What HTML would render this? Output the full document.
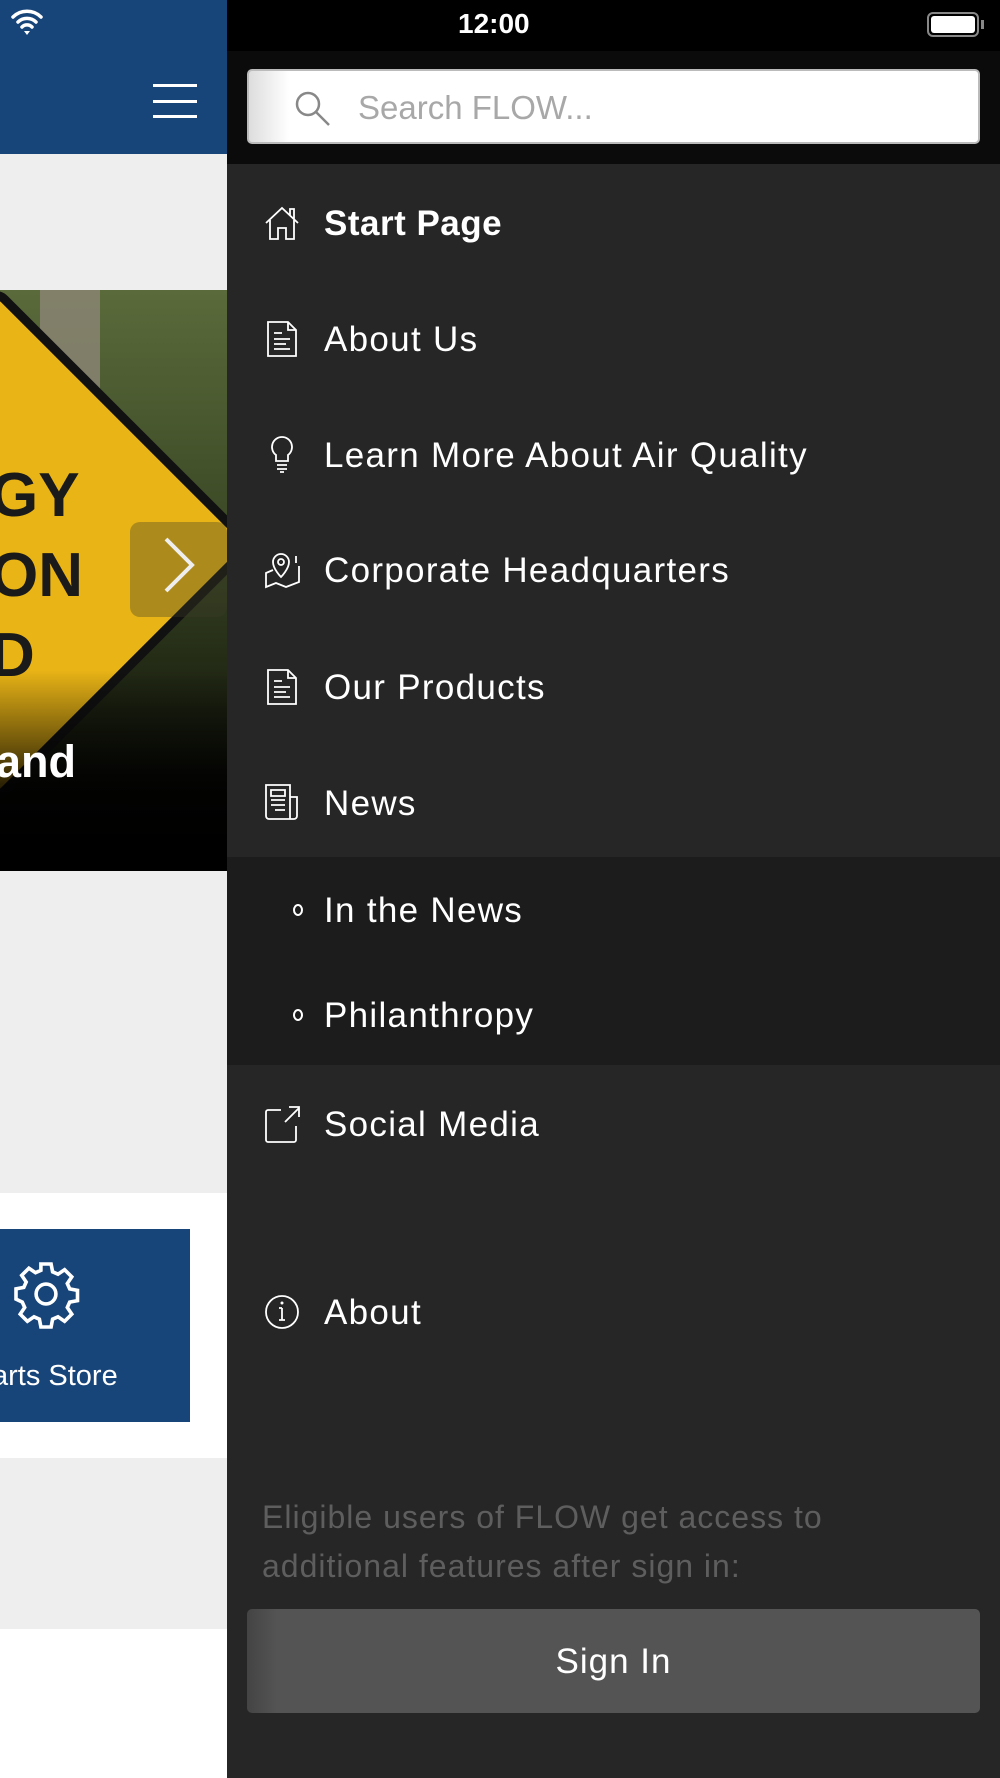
<!DOCTYPE html>
<html><head><meta charset="utf-8"><style>
*{margin:0;padding:0;box-sizing:border-box}
body{width:1000px;height:1778px;overflow:hidden;position:relative;font-family:"Liberation Sans",sans-serif;background:#fff}
.abs{position:absolute}
.menu{position:absolute;left:227px;width:773px;}
.item{position:absolute;left:0;width:773px;height:100px;display:flex;align-items:center;color:#fff;font-size:35px;letter-spacing:1.3px}
.item svg{position:absolute;left:36px}
.item span{position:absolute;left:97px;top:31px}
</style></head><body>
<!-- left app -->
<div class="abs" style="left:0;top:0;width:227px;height:154px;background:#174479"></div>
<svg class="abs" style="left:10px;top:6px" width="34" height="30" viewBox="0 0 34 30"><path d="M3 11a20 20 0 0 1 28 0M8 16a13 13 0 0 1 18 0M12 21a7 7 0 0 1 10 0" stroke="#fff" stroke-width="3.5" fill="none" stroke-linecap="round"/><path d="M14 25l3 4 3-4z" fill="#fff"/></svg>
<div class="abs" style="left:153px;top:84px;width:44px;height:3px;background:#fff"></div>
<div class="abs" style="left:153px;top:100px;width:44px;height:3px;background:#fff"></div>
<div class="abs" style="left:153px;top:115px;width:44px;height:3px;background:#fff"></div>
<div class="abs" style="left:0;top:154px;width:227px;height:136px;background:#eeeeee"></div>
<div class="abs" style="left:0;top:290px;width:227px;height:581px;overflow:hidden;background:linear-gradient(180deg,#5a6a3a 0%,#3c4a26 40%,#1e2412 70%,#000 100%)">
  <div class="abs" style="left:40px;top:0;width:60px;height:260px;background:#8c8676;opacity:.8"></div>
  <div class="abs" style="left:-190px;top:70px;width:370px;height:370px;background:#e9b416;border:9px solid #111;transform:rotate(45deg);border-radius:18px"></div>
  <div class="abs" style="left:-10px;top:170px;font:bold 62px 'Liberation Sans';color:#1a1a1a">GY</div>
  <div class="abs" style="left:-10px;top:250px;font:bold 62px 'Liberation Sans';color:#1a1a1a">ON</div>
  <div class="abs" style="left:-10px;top:330px;font:bold 62px 'Liberation Sans';color:#1a1a1a">D</div>
  <div class="abs" style="left:0;top:380px;width:227px;height:201px;background:linear-gradient(180deg,rgba(0,0,0,0),rgba(0,0,0,.85) 60%,#000)"></div>
  <div class="abs" style="left:130px;top:232px;width:97px;height:95px;background:rgba(60,60,40,.35);border-radius:10px"></div>
  <svg class="abs" style="left:160px;top:245px" width="40" height="60"><path d="M6 4l26 26-26 26" stroke="#eee" stroke-width="4" fill="none"/></svg>
  <div class="abs" style="left:-4px;top:446px;font:bold 45px 'Liberation Sans';color:#fff">and</div>
</div>
<div class="abs" style="left:0;top:871px;width:227px;height:322px;background:#eeeeee"></div>
<div class="abs" style="left:0;top:1229px;width:190px;height:193px;background:#174479"></div>
<svg class="abs" style="left:10px;top:1258px" width="72" height="72" viewBox="0 0 24 24"><path d="M10.3 2h3.4l.5 2.6 1.8.8 2.2-1.5 2.4 2.4-1.5 2.2.8 1.8 2.6.5v3.4l-2.6.5-.8 1.8 1.5 2.2-2.4 2.4-2.2-1.5-1.8.8-.5 2.6h-3.4l-.5-2.6-1.8-.8-2.2 1.5-2.4-2.4 1.5-2.2-.8-1.8L2 13.7v-3.4l2.6-.5.8-1.8-1.5-2.2 2.4-2.4 2.2 1.5 1.8-.8z" fill="none" stroke="#fff" stroke-width="1.2"/><circle cx="12" cy="12" r="3.3" fill="none" stroke="#fff" stroke-width="1.2"/></svg>
<div class="abs" style="left:-8px;top:1360px;font-size:29px;color:#fff">arts Store</div>
<div class="abs" style="left:0;top:1458px;width:227px;height:171px;background:#eeeeee"></div>

<!-- drawer -->
<div class="menu" style="top:0;height:51px;background:#000"></div>
<div class="abs" style="left:458px;top:8px;font-size:28px;font-weight:bold;color:#fff">12:00</div>
<div class="abs" style="left:927px;top:12px;width:52px;height:25px;border:2px solid #888;border-radius:6px;padding:2px"><div style="width:100%;height:100%;background:#fff;border-radius:3px"></div></div>
<div class="abs" style="left:981px;top:20px;width:3px;height:9px;background:#888"></div>
<div class="menu" style="top:51px;height:113px;background:#0b0b0b"></div>
<div class="abs" style="left:247px;top:69px;width:733px;height:75px;background:linear-gradient(90deg,#ddd,#fff 40px);border:2px solid #bbb;border-radius:5px"></div>
<svg class="abs" style="left:292px;top:88px" width="42" height="42"><circle cx="16" cy="16" r="11" stroke="#888" stroke-width="2.5" fill="none"/><path d="M24 24l13 13" stroke="#888" stroke-width="2.5"/></svg>
<div class="abs" style="left:358px;top:89px;font-size:33px;color:#a8a8a8">Search FLOW...</div>
<div class="menu" style="top:164px;height:1614px;background:#262626"></div>
<div class="menu" style="top:857px;height:208px;background:#1c1c1c"></div>

<div class="menu" style="top:0">
<div class="item" style="top:173px;font-weight:bold;letter-spacing:.5px"><svg width="38" height="38" viewBox="0 0 38 38"><path d="M3 19L19 4l16 15M7 16v19h8v-11h8v11h8V16M27 11V5h4v10" fill="none" stroke="#fff" stroke-width="1.8"/></svg><span>Start Page</span></div>
<div class="item" style="top:289px"><svg width="38" height="38" viewBox="0 0 38 38"><path d="M5 2h20l8 8v26H5zM25 2v8h8M11 13h8M11 19h16M11 24h12M11 29h16" fill="none" stroke="#fff" stroke-width="1.8"/></svg><span>About Us</span></div>
<div class="item" style="top:405px"><svg width="38" height="40" viewBox="0 0 38 40"><path d="M19 2a10 10 0 0 0-6 18v6h12v-6a10 10 0 0 0-6-18zM14 30h10M14 34h10M17 37h4" fill="none" stroke="#fff" stroke-width="1.8"/></svg><span>Learn More About Air Quality</span></div>
<div class="item" style="top:520px"><svg width="40" height="40" viewBox="0 0 40 40"><path d="M18 27s-8-8-8-15a8 8 0 0 1 16 0c0 7-8 15-8 15zM10 20l-7 3v14l10-4 10 4 13-5V16" fill="none" stroke="#fff" stroke-width="1.8"/><circle cx="18" cy="12" r="3" fill="none" stroke="#fff" stroke-width="1.8"/><path d="M33 6v7" stroke="#fff" stroke-width="1.8"/></svg><span>Corporate Headquarters</span></div>
<div class="item" style="top:637px"><svg width="38" height="38" viewBox="0 0 38 38"><path d="M5 2h20l8 8v26H5zM25 2v8h8M11 13h8M11 19h16M11 24h12M11 29h16" fill="none" stroke="#fff" stroke-width="1.8"/></svg><span>Our Products</span></div>
<div class="item" style="top:753px"><svg width="40" height="40" viewBox="0 0 40 40"><path d="M3 2h24v34H6a3 3 0 0 1-3-3zM27 14h7v19a3 3 0 0 1-3 3h-4M8 7h14v6H8zM8 17h14M8 22h14M12 27h10" fill="none" stroke="#fff" stroke-width="1.8"/></svg><span>News</span></div>
<div class="item" style="top:860px"><svg style="left:65px" width="12" height="14"><ellipse cx="6" cy="7" rx="4" ry="5" fill="none" stroke="#fff" stroke-width="2"/></svg><span>In the News</span></div>
<div class="item" style="top:965px"><svg style="left:65px" width="12" height="14"><ellipse cx="6" cy="7" rx="4" ry="5" fill="none" stroke="#fff" stroke-width="2"/></svg><span>Philanthropy</span></div>
<div class="item" style="top:1074px"><svg width="40" height="40" viewBox="0 0 40 40"><path d="M18 6H5a2 2 0 0 0-2 2v28a2 2 0 0 0 2 2h26a2 2 0 0 0 2-2V22M22 18L36 4M26 3h10v10" fill="none" stroke="#fff" stroke-width="1.8"/></svg><span>Social Media</span></div>
<div class="item" style="top:1262px"><svg width="38" height="38" viewBox="0 0 38 38"><circle cx="19" cy="19" r="16" fill="none" stroke="#fff" stroke-width="1.8"/><path d="M19 15v12M16 27h6M16 15h3" stroke="#fff" stroke-width="1.8"/><circle cx="19" cy="10" r="1.5" fill="#fff"/></svg><span>About</span></div>
</div>
<div class="abs" style="left:262px;top:1493px;width:640px;font-size:32px;line-height:49px;letter-spacing:1px;color:#5e5e5e">Eligible users of FLOW get access to additional features after sign in:</div>
<div class="abs" style="left:247px;top:1609px;width:733px;height:104px;background:linear-gradient(90deg,#444,#545454 30px);border-radius:5px;color:#fff;font-size:35px;letter-spacing:1px;text-align:center;line-height:106px">Sign In</div>
</body></html>
